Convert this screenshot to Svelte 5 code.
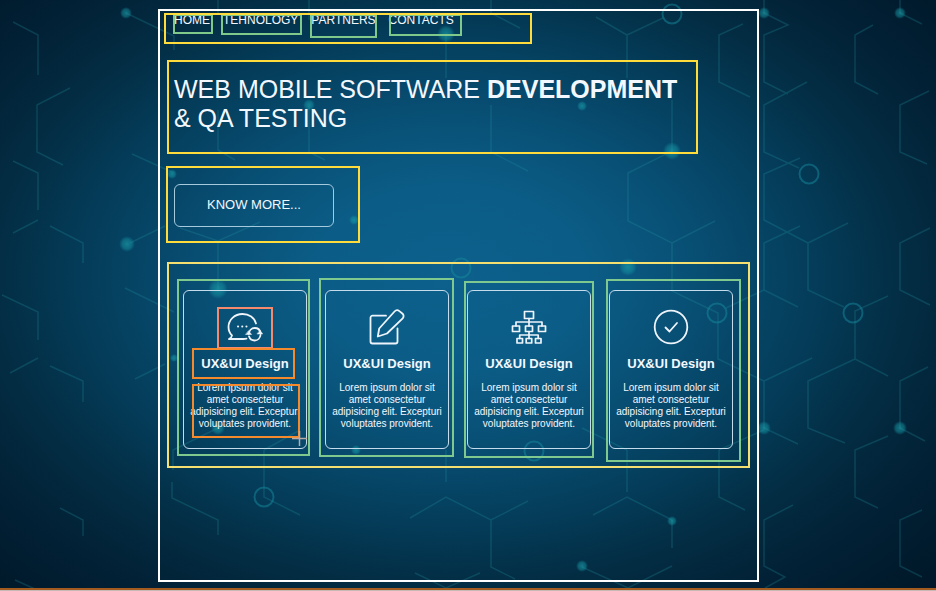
<script>
  const links = ['HOME', 'TEHNOLOGY', 'PARTNERS', 'CONTACTS'];
  const icons = ['chat', 'edit', 'tree', 'check'];

  const lines = [
    'M13 22 38 35V75', 'M70 88 37 105V152L63 165', 'M13 161 38 173V210', 'M13 233 38 220',
    'M50 226 83 243V263', 'M126 13 174 36V50', 'M132 154 174 173', 'M130 243 165 226',
    'M2 295 38 312V340', 'M10 373 38 358', 'M50 366 83 381V402', 'M125 288 174 312', 'M135 379 165 364',
    'M60 508 83 520V536', 'M15 580 35 589', 'M764 0V13L788 25 764 35V82L788 94', 'M807 82 764 105V152L799 168',
    'M800 158 764 174V220L808 243', 'M800 226 764 243V290L798 307', 'M848 223 808 243V290L844 307',
    'M888 296 855 311V359L888 376', 'M812 358 764 381V428L798 444', 'M855 359 808 381V428L845 443',
    'M888 436 855 450V497L878 508', 'M793 505 764 520V566L785 577 765 588', 'M922 510 900 520V566L922 577',
    'M873 25 855 35V82L878 94', 'M929 91 900 105V152L927 164', 'M930 228 900 243V290L930 305',
    'M928 367 900 381V428L925 441', 'M900 0V13L922 24', 'M596 17 627 35V78M627 35 663 18',
    'M743 24 719 35V82L750 97', 'M491 0V13L520 28', 'M491 105V152L528 171', 'M672 100V151L628 173V221L672 243 715 221',
    'M672 243V291L718 313V359L764 381', 'M726 308 764 290', 'M446 36V78', 'M309 106V152L325 160',
    'M218 110V150L235 160', 'M180 228 218 241 260 222M218 241V290', 'M173 470V450L218 428', 'M172 482V498L218 520V535',
    'M264 450V497L300 515M264 450 300 430', 'M410 518 446 497 491 520 528 501M491 520V567L515 579',
    'M446 450V482', 'M593 515 627 497 672 520V548M627 450V492', 'M719 450V497L745 510M719 450 764 430',
    'M582 567 628 588 672 566', 'M415 573 446 588 480 573', 'M582 428 627 450', 'M218 0V13M309 0V20'
  ];
  const dots = [
    [126, 13, 6], [127, 244, 8], [446, 34, 9], [764, 13, 6], [900, 13, 6], [764, 428, 7], [900, 428, 7],
    [672, 151, 9], [582, 106, 5], [628, 267, 9], [309, 105, 6], [172, 174, 5], [354, 220, 5],
    [218, 289, 10], [356, 450, 5], [582, 566, 6], [672, 521, 5], [174, 358, 4], [218, 428, 7]
  ];
  const rings = [[672, 14], [809, 174], [853, 313], [717, 313], [461, 268], [264, 497], [534, 451]];
</script>

<div class="page">
  <svg class="backdrop" viewBox="0 0 936 591" preserveAspectRatio="xMidYMid slice" aria-hidden="true">
    <defs>
      <radialGradient id="glow">
        <stop offset="0" stop-color="#20a9b2" />
        <stop offset="0.6" stop-color="#1695a3" stop-opacity="0.8" />
        <stop offset="1" stop-color="#1695a3" stop-opacity="0" />
      </radialGradient>
    </defs>
    <g fill="none" stroke="#2496a2" stroke-width="1.5" opacity="0.25">
      {#each lines as d}<path {d} />{/each}
    </g>
    <g fill="none" stroke="#168a9d" stroke-width="2" opacity="0.5">
      {#each rings as [cx, cy]}<circle {cx} {cy} r="9.500" />{/each}
    </g>
    <g fill="url(#glow)" opacity="0.6">
      {#each dots as [cx, cy, r]}<circle {cx} {cy} {r} />{/each}
    </g>
  </svg>

  <main class="container">
    <nav class="frame">
      {#each links as link}<a href="#{link.toLowerCase()}">{link}</a>{/each}
    </nav>

    <header class="hero frame">
      <h1>WEB MOBILE SOFTWARE <strong>DEVELOPMENT</strong><br />&amp; QA TESTING</h1>
    </header>

    <div class="cta frame">
      <button type="button">KNOW MORE...</button>
    </div>

    <section class="features frame">
      {#each icons as icon, i}
        <article class="card">
          <div class="icon">
            <svg viewBox="0 0 36 36" width="36" height="36" aria-hidden="true">
              {#if icon === 'chat'}
                <path d="M29 14.5C27.5 8.5 22 5 15.500 5 7.500 5 1.500 11 1.500 18c0 3.500 1.300 6.300 3.500 8.500C4.800 28 3.500 29.300 2 30h14.500c1 0 2-.1 3-.3" />
                <path d="M11 17.500h.1M15.200 17.500h.1M19.400 17.500h.1" stroke-width="2" />
                <path d="M21.700 25c.3-3.300 2.700-6 6-6 2.800 0 5.200 1.800 5.700 4.600M33.500 26c-.4 3.200-2.800 5.500-5.800 5.500-2.700 0-4.900-1.500-5.700-4.200" />
                <path d="M18.800 25.500h5.800l-2.900-3.600zM30.300 25h5.400l-2.500-3.500z" fill="#eef4fb" stroke-width="0.500" />
              {:else if icon === 'edit'}
                <path d="M17 6.700H3.500A2 2 0 0 0 1.500 8.700V32.500a2 2 0 0 0 2 2h23a2 2 0 0 0 2-2V19.500" />
                <path d="M8.800 27.500 10.200 19.500 25.500 2.500c1.300-1.500 3.300-1.700 4.900-.4l2.900 2.400c1.600 1.300 1.700 3.300.4 4.800L18 24.500z" />
              {:else if icon === 'tree'}
                <g stroke-width="1.700">
                  <path d="M13.500 2.500h9v7h-9zM1.500 17h7v5.500h-7zM14.500 17h7v5.500h-7zM27.500 17h7v5.500h-7zM6 29.500h5.500v4.500H6zM15.200 29.500h5.500v4.500h-5.500zM24.500 29.500h5.500v4.500h-5.500z" />
                  <path d="M18 9.500V17M5 17v-4h26v4M18 22.500v7M8.700 29.500V26h18.500v3.500" />
                </g>
              {:else}
                <circle cx="18" cy="18" r="16.300" />
                <path d="m12.500 18.500 4 4 7.500-8.500" />
              {/if}
            </svg>
          </div>
          <h2>UX&amp;UI Design</h2>
          <p>Lorem ipsum dolor sit amet consectetur adipisicing elit. Excepturi voluptates provident.</p>
          {#if i === 0}
            <svg class="cross" viewBox="0 0 15 15" width="15" height="15" aria-hidden="true">
              <path d="M7.500 0V15M0 7.500H15" />
            </svg>
          {/if}
        </article>
      {/each}
    </section>
  </main>

  <div class="strip"></div>
</div>

<style>
  .page {
    position: relative;
    display: flex;
    flex-direction: column;
    min-height: 100vh;
    box-sizing: border-box;
    padding-top: 9px;
    color: #f3f8ff;
    font-family: "Liberation Sans", Arial, sans-serif;
    background:
      radial-gradient(ellipse 56% 60% at 48% 47%, #0c608b 0%, #0b5d87 25%, #084e73 48%, #043c59 70%, #032c42 88%, #022136 104%, #001829 125%);
  }

  .backdrop {
    position: absolute;
    inset: 0;
    width: 100%;
    height: 100%;
  }

  .container {
    position: relative;
    margin: 0 177px 6px 158px;
    padding: 2px 0 112px;
    border: 2px solid #fff;
  }

  .frame {
    box-sizing: border-box;
    outline: 2px solid #ffdc3c;
    outline-offset: -2px;
  }

  nav {
    display: flex;
    align-items: flex-start;
    gap: 8px;
    max-width: 368px;
    height: 31px;
    margin-left: 4px;
    padding: 1px 0 0 9px;
  }

  nav a {
    padding: 0 3px 8px 1px;
    outline: 2px solid #7fc98b;
    outline-offset: -2px;
    color: inherit;
    font-size: 12px;
    line-height: 12px;
    text-decoration: none;
  }

  nav a:nth-child(2) {
    padding: 0 4px 9px 2px;
  }

  nav a:nth-child(3) {
    padding: 0 1px 12px;
  }

  nav a:nth-child(4) {
    margin-left: 4px;
    padding: 0 8px 10px 0;
  }

  .hero {
    max-width: 531px;
    min-height: 94px;
    margin: 16px 7px 0;
    padding: 15px 7px;
  }

  h1 {
    margin: 0;
    font-size: 25px;
    font-weight: 400;
    line-height: 29px;
  }

  .cta {
    max-width: 194px;
    margin: 12px 6px 0;
    padding: 18px 26px 16px 8px;
  }

  button {
    display: block;
    width: 100%;
    height: 43px;
    padding: 0 0 2px;
    border: 1px solid #a5cade;
    border-radius: 6px;
    background: transparent;
    color: inherit;
    font: 13px "Liberation Sans", Arial, sans-serif;
    cursor: pointer;
  }

  .features {
    display: grid;
    grid-template-columns: repeat(4, minmax(0, 1fr));
    gap: 18px;
    margin: 19px 7px 0;
    padding: 28px 17px 19px 16px;
    outline-color: #f5df70;
  }

  .card {
    --frame: -12px -4px -8px -7px;
    position: relative;
    padding: 18px 4px;
    border: 1px solid #c4dceb;
    border-radius: 6px;
    text-align: center;
  }

  .card:nth-child(2) {
    --frame: -13px -6px -9px -7px;
  }

  .card:nth-child(3) {
    --frame: -10px -4px -10px -4px;
  }

  .card:nth-child(4) {
    --frame: -12px -9px -14px -4px;
  }

  .card::before {
    content: "";
    position: absolute;
    inset: var(--frame);
    border: 2px solid #7fc98f;
  }

  .icon {
    position: relative;
    height: 36px;
  }

  .icon svg {
    display: block;
    margin: 0 auto;
    fill: none;
    stroke: #eef4fb;
    stroke-width: 1.8;
    stroke-linejoin: round;
    stroke-linecap: round;
  }

  h2 {
    position: relative;
    margin: 11px 0 10px;
    font-size: 13px;
    line-height: 16px;
  }

  p {
    position: relative;
    margin: 0;
    font-size: 10px;
    line-height: 12px;
  }

  .card:first-child .icon::after,
  .card:first-child h2::after,
  .card:first-child p::after {
    content: "";
    position: absolute;
    border: 2px solid #f58a2c;
  }

  .card:first-child .icon::after {
    inset: -2px 29px -4px 29px;
    border-color: #f58a6c;
  }

  .card:first-child h2::after {
    inset: -8px 7px -7px 4px;
  }

  .card:first-child p::after {
    inset: 2px 2px -8px 4px;
  }

  .cross {
    position: absolute;
    right: -1px;
    bottom: 2px;
    fill: none;
    stroke: #b9aaa6;
    stroke-width: 1.5;
  }

  .strip {
    position: relative;
    height: 2px;
    margin-top: auto;
    border-bottom: 1px solid #c9b9b4;
    background: #a35b1f;
  }
</style>
